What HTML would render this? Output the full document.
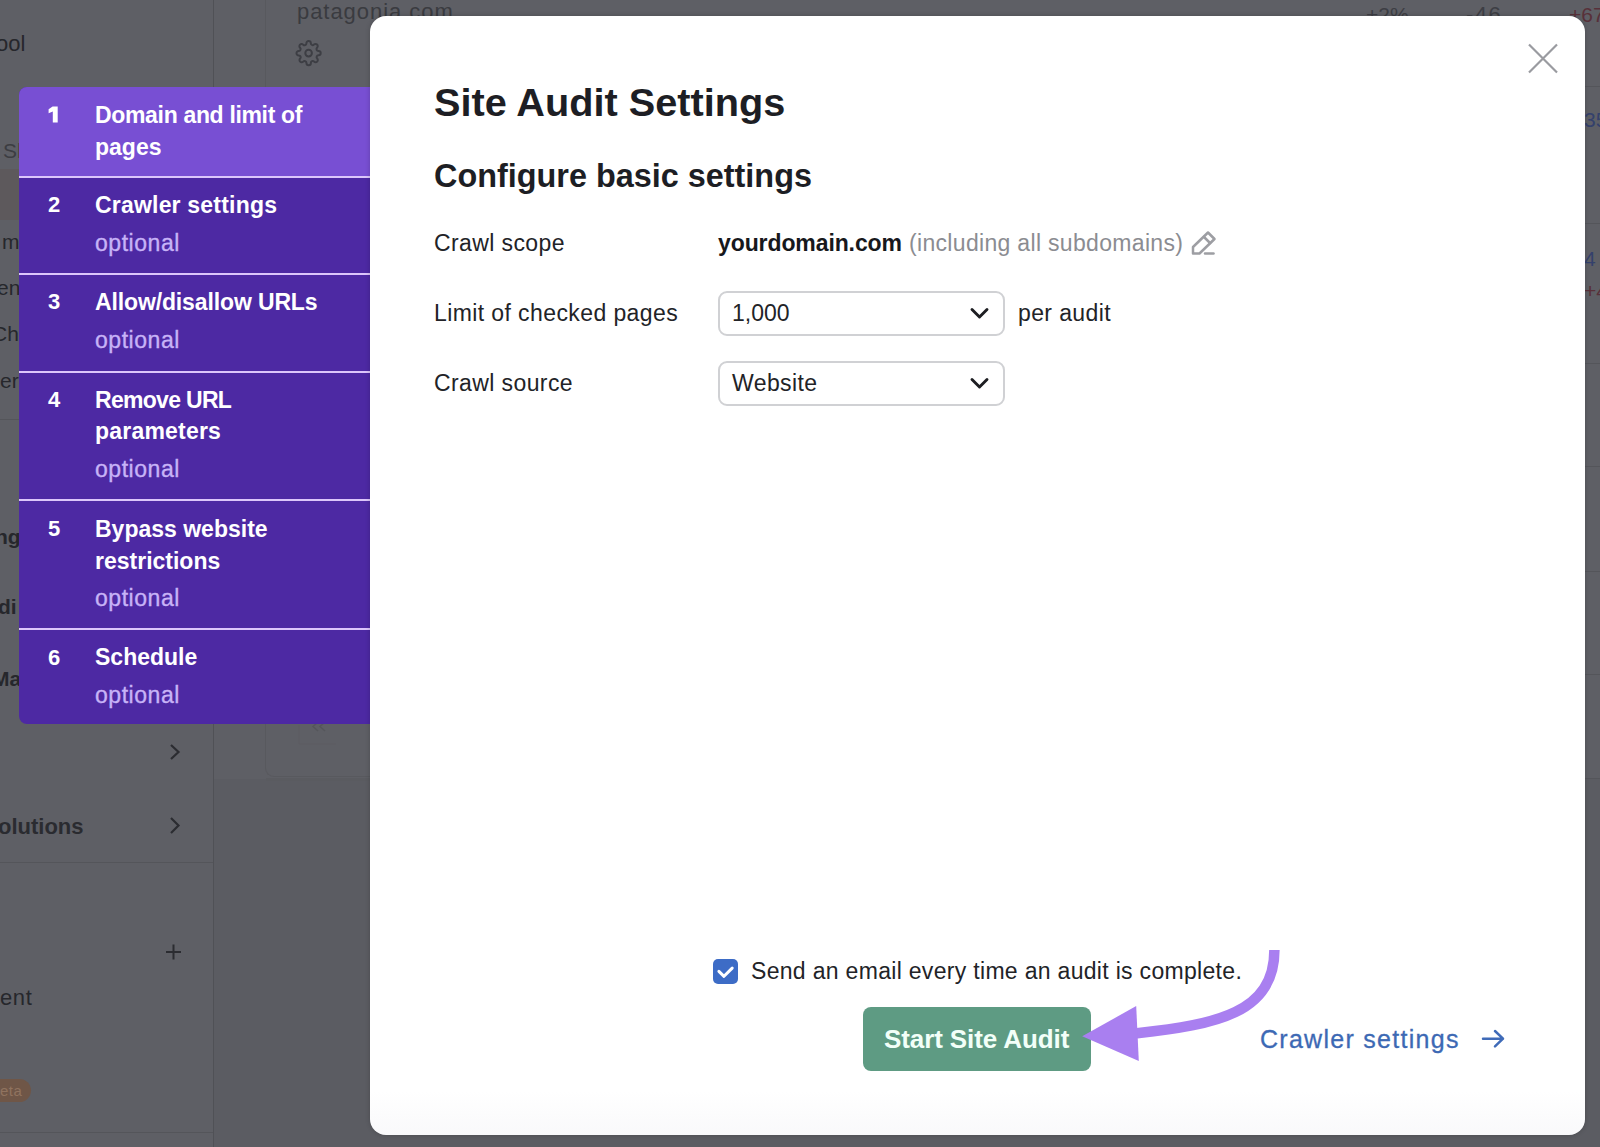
<!DOCTYPE html>
<html><head><meta charset="utf-8">
<style>
*{margin:0;padding:0;box-sizing:border-box}
html,body{width:1600px;height:1147px;overflow:hidden;background:#5e5f65;font-family:"Liberation Sans",sans-serif}
.a{position:absolute;white-space:nowrap}
#bg{position:absolute;left:0;top:0;width:1600px;height:1147px;background:#5e5f65}
.bt{position:absolute;white-space:nowrap;color:#26272c;font-size:21px;line-height:22px}
.vl{position:absolute;width:1px;background:#505156}
.hl{position:absolute;height:1px;background:#54555a}
#steps{position:absolute;left:19px;top:87px;width:351px;height:637px;border-radius:8px 0 0 8px;overflow:hidden;background:#4d29a3}
.st{position:absolute;left:0;width:351px;background:#4d29a3}
.st.on{background:#784fd3}
.sep{position:absolute;left:0;width:351px;height:2px;background:#dcc6fb}
.num{position:absolute;left:29px;color:#fff;font-weight:bold;font-size:22px;line-height:32px}
.ttl{position:absolute;left:76px;color:#fff;font-weight:bold;font-size:23px;line-height:32px;white-space:nowrap}
.opt{position:absolute;left:76px;color:#c7b3f7;font-size:23px;line-height:32px;white-space:nowrap;letter-spacing:0.55px;-webkit-text-stroke:0.35px #c7b3f7}
#modal{position:absolute;left:370px;top:16px;width:1215px;height:1119px;background:linear-gradient(to bottom,#fff 0,#fff 1075px,#f9f9fb 1119px);border-radius:16px;box-shadow:0 0 5px rgba(0,0,0,0.2)}
.lbl{position:absolute;color:#222327;font-size:23px;line-height:30px;white-space:nowrap;letter-spacing:0.4px}
.dd{position:absolute;left:348px;width:287px;height:45px;border:2px solid #d0d1d4;border-radius:9px}
svg{position:absolute;overflow:visible}
</style></head><body>
<div id="bg">
  <div style="position:absolute;left:214px;top:779px;width:1386px;height:368px;background:#5b5c62"></div>
  <div class="vl" style="left:213px;top:0;height:1147px"></div>
  <div class="hl" style="left:1585px;top:363px;width:15px"></div><div class="hl" style="left:1585px;top:466px;width:15px"></div><div class="hl" style="left:1585px;top:571px;width:15px"></div><div class="hl" style="left:1585px;top:674px;width:15px"></div><div class="hl" style="left:1585px;top:778px;width:15px"></div>
  <div class="vl" style="left:265px;top:0;height:768px;background:#58595e"></div>
  <div style="position:absolute;left:265px;top:700px;width:120px;height:77px;border-left:1px solid #58595e;border-bottom:1px solid #58595e;border-radius:0 0 0 9px"></div>
  <div class="hl" style="left:266px;top:778px;width:110px;height:3px;background:#5a5b60"></div>
  <div class="hl" style="left:0;top:419px;width:213px"></div>
  <div class="hl" style="left:0;top:862px;width:213px"></div>
  <div class="hl" style="left:0;top:1132px;width:213px"></div>
  <div style="position:absolute;left:0;top:169px;width:213px;height:51px;background:#5d595c"></div>
  <div class="bt" style="left:-4px;top:33px;font-size:22px">ool</div>
  <div class="bt" style="left:3px;top:140px;color:#3c3d42;font-size:21px">Sl</div>
  <div class="bt" style="left:2px;top:231px;font-size:21px">m</div>
  <div class="bt" style="left:-3px;top:277px;font-size:21px">en</div>
  <div class="bt" style="left:-8px;top:323px;font-size:21px">Ch</div>
  <div class="bt" style="left:0px;top:370px;font-size:21px">er</div>
  <div class="bt" style="left:-5px;top:526px;font-size:21px;font-weight:bold">ng</div>
  <div class="bt" style="left:-2px;top:596px;font-size:21px;font-weight:bold">di</div>
  <div class="bt" style="left:-8px;top:668px;font-size:21px;font-weight:bold">Ma</div>
  <div class="bt" style="left:-2px;top:816px;font-size:22px;font-weight:bold;color:#2a2b30">olutions</div>
  <div class="bt" style="left:0px;top:987px;font-size:22px;letter-spacing:0.6px">ent</div>
  <div style="position:absolute;left:-20px;top:1079px;width:51px;height:23px;border-radius:12px;background:#6f5647"></div>
  <div class="bt" style="left:0;top:1080px;font-size:15px;color:#90735f;letter-spacing:0.5px">eta</div>
  <svg style="left:0;top:0" width="1" height="1">
    <path d="M171 745 L178.5 752 L171 759" fill="none" stroke="#2b2c31" stroke-width="2.2"/>
    <path d="M171 818 L178.5 825.5 L171 833" fill="none" stroke="#2b2c31" stroke-width="2.2"/>
    <path d="M166 952 H181 M173.5 944.5 V959.5" fill="none" stroke="#2b2c31" stroke-width="2"/>
    <g transform="translate(295.4 39.9) scale(1.1)" fill="none" stroke="#3d3e44" stroke-width="1.8" stroke-linecap="round" stroke-linejoin="round">
      <circle cx="12" cy="12" r="3"/>
      <path d="M19.4 15a1.65 1.65 0 0 0 .33 1.82l.06.06a2 2 0 0 1 0 2.830 2 2 0 0 1-2.83 0l-.06-.06a1.65 1.65 0 0 0-1.820-.33 1.65 1.65 0 0 0-1 1.51V21a2 2 0 0 1-2 2 2 2 0 0 1-2-2v-.09A1.65 1.65 0 0 0 9 19.4a1.65 1.65 0 0 0-1.82.33l-.06.06a2 2 0 0 1-2.83 0 2 2 0 0 1 0-2.83l.06-.06a1.65 1.65 0 0 0 .33-1.82 1.65 1.65 0 0 0-1.51-1H3a2 2 0 0 1-2-2 2 2 0 0 1 2-2h.09A1.65 1.65 0 0 0 4.6 9a1.65 1.65 0 0 0-.33-1.82l-.06-.06a2 2 0 0 1 0-2.83 2 2 0 0 1 2.83 0l.06.06a1.65 1.65 0 0 0 1.82.33H9a1.65 1.65 0 0 0 1-1.51V3a2 2 0 0 1 2-2 2 2 0 0 1 2 2v.09a1.65 1.65 0 0 0 1 1.51 1.65 1.65 0 0 0 1.82-.33l.06-.06a2 2 0 0 1 2.83 0 2 2 0 0 1 0 2.83l-.06.06a1.65 1.65 0 0 0-.33 1.82V9a1.65 1.65 0 0 0 1.51 1H21a2 2 0 0 1 2 2 2 2 0 0 1-2 2h-.09a1.65 1.65 0 0 0-1.51 1z"/>
    </g>
    <path d="M318 722 L313 726.5 L318 731 M325 722 L320 726.5 L325 731" fill="none" stroke="#55565b" stroke-width="1.5"/>
    <path d="M299 725 V744 H336" fill="none" stroke="#5c5d62" stroke-width="1"/>
  </svg>
  <div class="bt" style="left:297px;top:1px;color:#3a3b40;font-size:22px;letter-spacing:0.95px">patagonia.com</div>
  <div class="bt" style="left:1366px;top:4px;color:#3d3e44;font-size:21px">+2%</div>
  <div class="bt" style="left:1466px;top:4px;color:#3d3e44;font-size:22px;letter-spacing:1.5px">-46</div>
  <div class="bt" style="left:1569px;top:4px;color:#583039;font-size:21px">+67</div>
  <div class="hl" style="left:1585px;top:86px;width:15px"></div>
  <div class="hl" style="left:1585px;top:223px;width:15px"></div>
  <div class="bt" style="left:1584px;top:109px;color:#34416c;font-size:21px">35</div>
  <div class="bt" style="left:1584px;top:248px;color:#34416c;font-size:21px">4</div>
  <div class="bt" style="left:1584px;top:280px;color:#583039;font-size:21px">+4</div>
</div>

<div id="steps">
  <div class="st on" style="top:0;height:89px"></div>
  <div class="sep" style="top:89px"></div>
  <div class="sep" style="top:186px"></div>
  <div class="sep" style="top:284px"></div>
  <div class="sep" style="top:412px"></div>
  <div class="sep" style="top:541px"></div>

  <svg style="left:0;top:0" width="1" height="1"><path d="M33.6 19.4 H38.7 V35.5 H33.8 V24.6 L29.6 26.2 V22.3 Z" fill="#fff"/></svg>
  <div class="ttl" style="top:12px"><span style="letter-spacing:-0.33px">Domain and limit of</span><br>pages</div>

  <div class="num" style="top:102px">2</div>
  <div class="ttl" style="top:102px;letter-spacing:0.2px">Crawler settings</div>
  <div class="opt" style="top:140px">optional</div>

  <div class="num" style="top:199px">3</div>
  <div class="ttl" style="top:199px;letter-spacing:-0.13px">Allow/disallow URLs</div>
  <div class="opt" style="top:237px">optional</div>

  <div class="num" style="top:297px">4</div>
  <div class="ttl" style="top:298px;line-height:31px"><span style="letter-spacing:-0.7px">Remove URL</span><br><span style="letter-spacing:0.2px">parameters</span></div>
  <div class="opt" style="top:366px">optional</div>

  <div class="num" style="top:426px">5</div>
  <div class="ttl" style="top:426px">Bypass website<br>restrictions</div>
  <div class="opt" style="top:495px">optional</div>

  <div class="num" style="top:555px">6</div>
  <div class="ttl" style="top:554px">Schedule</div>
  <div class="opt" style="top:592px">optional</div>
</div>

<div id="modal">
  <div class="a" style="left:64px;top:62px;font-size:39.7px;line-height:48px;font-weight:bold;color:#1d1e24">Site Audit Settings</div>
  <div class="a" style="left:64px;top:140px;font-size:32.4px;line-height:40px;font-weight:bold;color:#1d1e24">Configure basic settings</div>

  <div class="lbl" style="left:64px;top:212px">Crawl scope</div>
  <div class="lbl" style="left:64px;top:282px">Limit of checked pages</div>
  <div class="lbl" style="left:64px;top:352px">Crawl source</div>

  <div class="lbl" style="left:348px;top:212px;font-weight:bold;color:#17181c;letter-spacing:-0.1px">yourdomain.com</div>
  <div class="lbl" style="left:539px;top:212px;color:#8b8c91;letter-spacing:0.32px">(including all subdomains)</div>
  <svg style="left:0;top:0" width="1" height="1">
    <g fill="none" stroke="#9d9ea3" stroke-width="2.5" stroke-linejoin="round" stroke-linecap="round">
      <path d="M823 237.5 V231 L838 216.5 L844.5 223 L829.5 237.5 Z"/>
      <path d="M834 221 L840 227"/>
      <path d="M835 237.5 H843.5"/>
    </g>
    <path d="M1159 28.5 L1187 56.5 M1187 28.5 L1159 56.5" fill="none" stroke="#9a9ba0" stroke-width="2.2"/>
    <path d="M602 293.5 L609.5 301 L617 293.5" fill="none" stroke="#1d1e22" stroke-width="2.9" stroke-linecap="round" stroke-linejoin="round"/>
    <path d="M602 363.5 L609.5 371 L617 363.5" fill="none" stroke="#1d1e22" stroke-width="2.9" stroke-linecap="round" stroke-linejoin="round"/>
  </svg>

  <div class="dd" style="top:275px"></div>
  <div class="lbl" style="left:362px;top:282px;letter-spacing:0">1,000</div>
  <div class="lbl" style="left:648px;top:282px;letter-spacing:0.38px">per audit</div>
  <div class="dd" style="top:345px"></div>
  <div class="lbl" style="left:362px;top:352px">Website</div>

  <div class="a" style="left:343px;top:943px;width:25px;height:25px;border-radius:5px;background:#3d6cc6"></div>
  <svg style="left:0;top:0" width="1" height="1">
    <path d="M348.9 955.4 L354 960.3 L362.2 952.1" fill="none" stroke="#fff" stroke-width="3" stroke-linecap="round" stroke-linejoin="round"/>
  </svg>
  <div class="lbl" style="left:381px;top:940px;letter-spacing:0.31px">Send an email every time an audit is complete.</div>

  <div class="a" style="left:493px;top:991px;width:228px;height:64px;background:#5e9b83;border-radius:8px"></div>
  <div class="a" style="left:514px;top:1008px;font-size:26px;line-height:30px;font-weight:bold;color:#f2fff8;letter-spacing:-0.1px">Start Site Audit</div>
  <div class="a" style="left:890px;top:1008px;font-size:25px;line-height:30px;color:#3d69b4;letter-spacing:1.28px;-webkit-text-stroke:0.3px #3d69b4">Crawler settings</div>
  <svg style="left:0;top:0" width="1" height="1">
    <path d="M1113 1022.7 H1133 M1125 1015 L1133 1022.7 L1125 1030.4" fill="none" stroke="#3f6bb8" stroke-width="2.5" stroke-linecap="round" stroke-linejoin="round"/>
    <path d="M904.4 934 C904.4 997.2 846.2 1008.5 767 1017.3 L745 1019.5" fill="none" stroke="#a97ff0" stroke-width="10.5"/>
    <path d="M712.2 1020.2 L766.2 990.1 L768.8 1045 Z" fill="#a97ff0"/>
  </svg>
</div>
</body></html>
